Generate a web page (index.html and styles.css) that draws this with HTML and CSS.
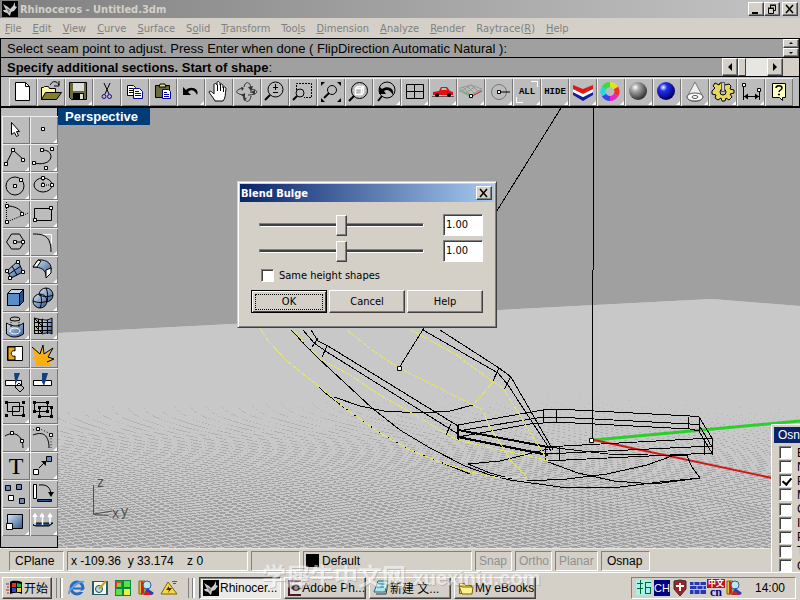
FILE: index.html
```
<!DOCTYPE html>
<html lang="zh">
<head>
    <meta charset="UTF-8">
    <meta name="viewport" content="width=device-width, initial-scale=1.0">
    <title>Rhinoceros - Untitled.3dm</title>
    <link rel="stylesheet" href="styles.css">
</head>
<body>
    <svg class="defs" width="0" height="0">
        <defs>
            <linearGradient id="steel" x1="0" y1="0" x2="1" y2="1"><stop offset="0" stop-color="#dce8f8"/><stop offset="1" stop-color="#2c5490"/></linearGradient>
            <radialGradient id="gray" cx=".35" cy=".3" r=".7"><stop offset="0" stop-color="#fff"/><stop offset=".3" stop-color="#aaa"/><stop offset="1" stop-color="#333"/></radialGradient>
            <radialGradient id="blue" cx=".35" cy=".3" r=".7"><stop offset="0" stop-color="#fff"/><stop offset=".3" stop-color="#2030f0"/><stop offset="1" stop-color="#000060"/></radialGradient>
            <symbol id="rhino" viewBox="0 0 16 16"><rect width="16" height="16"/><path d="M1 3l5 3 2 2 3-3 2-4 0 4 2 1-3 4-3 1-1 4-3-3-3-1-1-2 3 0z" fill="#ccc"/><path d="M4 7l4 2-1 3z" fill="#777"/></symbol>
            <symbol id="books" viewBox="0 0 18 18"><path d="M2 2h6v13H2z" fill="#e8c040" stroke="#806000"/><path d="M4 2l3 1v11l-3 2z" fill="#d02020"/><circle cx="10" cy="6" r="4" fill="#b8e8f0" stroke="#3060a0"/><path d="M7 15l3-6 7 5-2 2z" fill="#2040c0"/><path d="M6 16l4-4 5 4z" fill="#d02020"/></symbol>
        </defs>
    </svg>

    <div class="app">
        <header class="titlebar">
            <svg width="16" height="16"><use href="#rhino"/></svg>
            <h1>Rhinoceros - Untitled.3dm</h1>
            <div class="window-buttons">
                <button type="button" class="btn small" aria-label="Minimize"><svg width="14" height="12"><path d="M3 9h6v2H3z"/></svg></button>
                <button type="button" class="btn small" aria-label="Restore"><svg width="14" height="12"><path d="M5.500 5V2.500h5v5H9M3.500 5.500h5v5h-5zM5 2h6M3 5h6" fill="none" stroke="#000"/></svg></button>
                <button type="button" class="btn small last" aria-label="Close"><svg width="14" height="12"><path d="M3 2l7 8M10 2l-7 8" stroke="#000" stroke-width="1.500"/></svg></button>
            </div>
        </header>

        <nav class="menu">
            <a href="#"><u>F</u>ile</a>
            <a href="#"><u>E</u>dit</a>
            <a href="#"><u>V</u>iew</a>
            <a href="#"><u>C</u>urve</a>
            <a href="#"><u>S</u>urface</a>
            <a href="#">S<u>o</u>lid</a>
            <a href="#"><u>T</u>ransform</a>
            <a href="#">Too<u>l</u>s</a>
            <a href="#"><u>D</u>imension</a>
            <a href="#"><u>A</u>nalyze</a>
            <a href="#"><u>R</u>ender</a>
            <a href="#">Raytrace(<u>R</u>)</a>
            <a href="#"><u>H</u>elp</a>
        </nav>

        <section class="command">
            <div class="command-row">
                <span class="history">Select seam point to adjust. Press Enter when done ( FlipDirection Automatic Natural ):</span>
                <div class="spinner">
                    <button type="button" class="btn" aria-label="Up"><svg width="14" height="7"><path d="M7 2l2 2H5z"/></svg></button>
                    <button type="button" class="btn" aria-label="Down"><svg width="14" height="7"><path d="M5 3h4L7 5z"/></svg></button>
                </div>
            </div>
            <div class="command-row">
                <span class="prompt"><b>Specify additional sections. Start of shape</b>:</span>
                <div class="scroller">
                    <button type="button" class="btn" aria-label="Left"><svg width="14" height="16"><path d="M9 4v8L5 8z"/></svg></button>
                    <span class="scroll-thumb"></span>
                    <span class="scroll-track"></span>
                    <button type="button" class="btn" aria-label="Right"><svg width="14" height="16"><path d="M5 4v8l4-4z"/></svg></button>
                </div>
            </div>
        </section>

        <div class="toolbar">
            <button type="button" class="tool" aria-label="New"><svg viewBox="0 0 28 28"><path d="M6.500 4.500h10l4 4v14h-14z" fill="#fff" stroke="#000"/><path d="M16.500 4.500v4h4" fill="none" stroke="#000"/></svg></button>
            <button type="button" class="tool" aria-label="Open"><svg viewBox="0 0 28 28"><path d="M4.500 21.500v-12h2l1-1h4l1 2h6v4" fill="#fff8a0" stroke="#000"/><path d="M4.500 21.500l4-7h16l-5 7z" fill="#808030" stroke="#000"/><path d="M13 7c3-5 7-4 9 0M22 3v5h-5" fill="none" stroke="#000"/></svg></button>
            <button type="button" class="tool more" aria-label="Save"><svg viewBox="0 0 28 28"><path d="M4.500 4.500h17v17h-15l-2-2z" fill="#6b6b3c" stroke="#000"/><path d="M8 5h11v8H8z" fill="#ddd"/><path d="M8 15h11v6H8z"/><path d="M15 16h3v5h-3z" fill="#ddd"/></svg></button>
            <button type="button" class="tool" aria-label="Cut"><svg viewBox="0 0 28 28"><path d="M11 5l5 11M17 5l-5 11" stroke="#000"/><circle cx="11" cy="18.500" r="2" fill="none" stroke="#208"/><circle cx="16.500" cy="18.500" r="2" fill="none" stroke="#208"/></svg></button>
            <button type="button" class="tool" aria-label="Copy"><svg viewBox="0 0 28 28"><path d="M6.500 7.500h6l2 2v8h-8z" fill="#fff" stroke="#000"/><path d="M8 10.500h4M8 12.500h4M8 14.500h4" stroke="#000"/><path d="M12.500 10.500h6l3 3v7h-9z" fill="#fff" stroke="#009"/><path d="M14 13.500h4M14 15.500h6M14 17.500h6" stroke="#009"/></svg></button>
            <button type="button" class="tool" aria-label="Paste"><svg viewBox="0 0 28 28"><path d="M6.500 7.500h14v12h-14z" fill="#6b6b3c" stroke="#000"/><path d="M10 9l1-3h5l1 3z" fill="#dd8" stroke="#000"/><path d="M13.500 11.500h6l2 2v7h-8z" fill="#fff" stroke="#009"/><path d="M15 14.500h3M15 16.500h5M15 18.500h5" stroke="#009"/></svg></button>
            <button type="button" class="tool more" aria-label="Undo"><svg viewBox="0 0 28 28"><path d="M6 9v8h8l-3-3c3-3 7-2 9 3 3-6-6-10-11-5z"/></svg></button>
            <button type="button" class="tool" aria-label="Pan"><svg viewBox="0 0 28 28"><path d="M10 23c-2-4-5-7-6-9 1-2 3 0 5 2V7c0-2 2-2 3 0V5c0-2 2-2 3 0v2c1-2 3-1 3 1v2c1-2 3-1 3 1-1 5 0 8-3 12z" fill="#fff" stroke="#000"/><path d="M12.500 7v6M15.500 6v7M18.500 9v5" stroke="#000"/></svg></button>
            <button type="button" class="tool" aria-label="Rotate view"><svg viewBox="0 0 28 28"><path d="M10 10c-9 2-8 6 1 7M18 11c9 1 7 6-3 6M11 19c1 6 6 6 7-1M11 9c1-6 6-6 7 1v5" fill="none" stroke="#333"/><path d="M8 9l3 1-2 3zM22 12l-4 2 4 3zM10 19l4 1-3 3zM12 15l-4 2 4 3zM20 8l-2 5-3-4z" fill="#333"/></svg></button>
            <button type="button" class="tool" aria-label="Zoom"><svg viewBox="0 0 28 28"><circle cx="14.500" cy="11.500" r="7.500" fill="none" stroke="#000"/><path d="M9 17l-5 5" stroke="#000" stroke-width="2"/><path d="M14.500 6v6M12 9.500h5M12 14.500h5" stroke="#000"/></svg></button>
            <button type="button" class="tool" aria-label="Zoom window"><svg viewBox="0 0 28 28"><path d="M7.500 12V5.500h15v14H15" fill="none" stroke="#000" stroke-dasharray="2 1"/><circle cx="11" cy="15" r="4" fill="none" stroke="#000"/><path d="M8 18l-4 4" stroke="#000" stroke-width="2"/></svg></button>
            <button type="button" class="tool" aria-label="Zoom extents"><svg viewBox="0 0 28 28"><circle cx="15" cy="12" r="4.500" fill="none" stroke="#000"/><path d="M12 15l-5 5" stroke="#000" stroke-width="2"/><path d="M4 4h4L4 8zM24 4h-4l4 4zM4 24h4l-4-4zM24 24h-4l4-4z"/></svg></button>
            <button type="button" class="tool" aria-label="Zoom selected"><svg viewBox="0 0 28 28"><circle cx="14.500" cy="12.500" r="8" fill="none" stroke="#000"/><path d="M9 18l-5 5" stroke="#000" stroke-width="2"/><path d="M10.500 10.500h6v6h-6zM10.500 10.500l2-2h6l-2 2M16.500 16.500l2-2v-6" fill="none" stroke="#fff" stroke-width="1.500"/></svg></button>
            <button type="button" class="tool more" aria-label="Undo view"><svg viewBox="0 0 28 28"><circle cx="14" cy="12" r="8" fill="none" stroke="#000"/><path d="M9 18l-4 5" stroke="#000" stroke-width="2"/><path d="M6 8v8h7l-2-3c3-2 6-1 9 4 2-7-6-10-11-6z"/></svg></button>
            <button type="button" class="tool more" aria-label="Four viewports"><svg viewBox="0 0 28 28"><path d="M5.500 6.500h17v14h-17zM13.500 6v15M5 13.500h18" fill="none" stroke="#000"/></svg></button>
            <button type="button" class="tool more" aria-label="Right view"><svg viewBox="0 0 28 28"><path d="M3 18.500h22" stroke="#555"/><path d="M4 17v-3l6-1 2-4h6l3 4 3 1v3z" fill="#e01010"/><path d="M12 12l1-2h4l1 2z" fill="#bbb"/><circle cx="8" cy="17" r="2"/><circle cx="20" cy="17" r="2"/></svg></button>
            <button type="button" class="tool more" aria-label="Set CPlane"><svg viewBox="0 0 28 28"><path d="M3 10l11-3 11 4M3 13l11 6 11-7M3 10v4M6 9l9 10M10 8l9 9M14 7l8 7M24 11l-11 7M18 9L8 15M14 7L4 13" fill="none" stroke="#999"/><path d="M4 12l10 6" stroke="#5b5"/><path d="M15 18l10-5" stroke="#d22"/><path d="M12.500 16.500h3v3h-3z" fill="#fff" stroke="#000"/></svg></button>
            <button type="button" class="tool more" aria-label="Object snap"><svg viewBox="0 0 28 28"><circle cx="14" cy="14" r="7.500" fill="none" stroke="#777"/><path d="M14 14h11" stroke="#000"/><path d="M12.500 12.500h3v3h-3z" fill="#fff" stroke="#000"/></svg></button>
            <button type="button" class="tool more word">ALL<svg viewBox="0 0 28 28"><path d="M18 3.500h6.500V9M3.500 19v5.500H10" fill="none" stroke="#fff"/></svg></button>
            <button type="button" class="tool more word">HIDE</button>
            <button type="button" class="tool more" aria-label="Layers"><svg viewBox="0 0 28 28"><path d="M4 14l10 5 10-5v3l-10 6-10-6z" fill="#1020a0"/><path d="M4 11l10 4 10-4v3l-10 5-10-5z" fill="#fff"/><path d="M4 7l10 4 10-4v4l-10 5-10-5z" fill="#e01818"/></svg></button>
            <button type="button" class="tool more" aria-label="Color"><svg viewBox="0 0 28 28" fill="none" stroke-width="5"><path d="M13 6.500a7 7 0 0 1 6 3.500" stroke="#e8e020"/><path d="M19 10a7 7 0 0 1 0 7" stroke="#f03030"/><path d="M19 17a7 7 0 0 1-6 3.500" stroke="#f020d0"/><path d="M13 20.500a7 7 0 0 1-6-3.500" stroke="#4040f0"/><path d="M7 17a7 7 0 0 1 0-7" stroke="#20d8f0"/><path d="M7 10a7 7 0 0 1 6-3.500" stroke="#30e040"/></svg></button>
            <button type="button" class="tool more" aria-label="Shade"><svg viewBox="0 0 28 28"><circle cx="13" cy="13" r="9" fill="url(#gray)"/></svg></button>
            <button type="button" class="tool more" aria-label="Render"><svg viewBox="0 0 28 28"><circle cx="13" cy="13" r="9" fill="url(#blue)"/></svg></button>
            <button type="button" class="tool more" aria-label="Spotlight"><svg viewBox="0 0 28 28"><path d="M14 4L6 19c1 6 15 6 16 0z" fill="#eee" stroke="#777"/><ellipse cx="14" cy="19" rx="8" ry="4" fill="#fff" stroke="#555"/><ellipse cx="14" cy="19" rx="3" ry="1.500" fill="none" stroke="#555"/></svg></button>
            <button type="button" class="tool more" aria-label="Options"><svg viewBox="0 0 28 28"><path d="M5 11l-2 2v3l4 1-1 3 3 2 3-2 1 3h3l1-3 3 2 3-3-2-3 4-1v-3l-4-1 1-3-2-2-4 1-1-2h-4l-1 2-4-2-2 3 2 2z" fill="#e8d860" stroke="#000"/><circle cx="14" cy="14" r="3" fill="#bcbcbc" stroke="#000"/><path d="M12.500 4.500v9h3v-9z" fill="#ccc" stroke="#555"/></svg></button>
            <button type="button" class="tool more" aria-label="Dimension"><svg viewBox="0 0 28 28"><path d="M6.500 8v14M22.500 12v10M7 18.500h15" stroke="#000"/><path d="M7 18.500l4-3v6zM22 18.500l-4-3v6z"/><path d="M5.500 5.500h3v3h-3zM20.500 10.500h3v3h-3z" fill="#fff" stroke="#000"/></svg></button>
            <button type="button" class="tool" aria-label="Help"><svg viewBox="0 0 28 28"><path d="M7.500 5.500h13v14h-3v3l-3-3h-7z" fill="#ffffc0" stroke="#000"/><path d="M11 10c0-3 6-3 6 0 0 2-3 2-3 4M13 16.500h2" fill="none" stroke="#000" stroke-width="1.500"/></svg></button>
        </div>

        <main class="workspace">
            <div class="palette">
                <button type="button" class="tool" aria-label="Select"><svg viewBox="0 0 28 28"><path d="M9.500 6.500v12l3-2 2 4 2-1-2-4h3z" fill="#fff" stroke="#000"/></svg></button>
                <button type="button" class="tool more" aria-label="Point"><svg viewBox="0 0 28 28"><path class="pt" d="M11.500 11.500h3v3h-3z"/></svg></button>
                <button type="button" class="tool more" aria-label="Polyline"><svg viewBox="0 0 28 28"><path class="ln" d="M4 20l7-14 11 10"/><path class="pt" d="M2.500 18.500h3v3h-3zM9.500 4.500h3v3h-3zM19.500 14.500h3v3h-3z"/></svg></button>
                <button type="button" class="tool more" aria-label="Curve"><svg viewBox="0 0 28 28"><path class="ln" d="M4 19c8 2 16 0 17-6 0-5-4-7-9-7"/><path class="pt" d="M2.500 17.500h3v3h-3zM10.500 4.500h3v3h-3zM20.500 3.500h3v3h-3zM14.500 22.500h3v3h-3z"/></svg></button>
                <button type="button" class="tool more" aria-label="Circle"><svg viewBox="0 0 28 28"><circle class="ln" cx="13" cy="14" r="9"/><path class="pt" d="M11.500 12.500h3v3h-3zM17.500 6.500h3v3h-3z"/></svg></button>
                <button type="button" class="tool more" aria-label="Ellipse"><svg viewBox="0 0 28 28"><ellipse class="ln" cx="13" cy="13" rx="9" ry="7"/><path class="ln" d="M13 6v7h9" stroke-dasharray="1 1"/><path class="pt" d="M11.500 11.500h3v3h-3zM11.500 4.500h3v3h-3zM20.500 11.500h3v3h-3z"/></svg></button>
                <button type="button" class="tool more" aria-label="Arc"><svg viewBox="0 0 28 28"><path class="ln" d="M5 6c8 0 13 3 16 8"/><path class="ln" d="M4.500 2v20l22-9" stroke-dasharray="1 1"/><path class="pt" d="M3.500 4.500h3v3h-3zM3.500 20.500h3v3h-3zM18.500 12.500h3v3h-3z"/></svg></button>
                <button type="button" class="tool more" aria-label="Rectangle"><svg viewBox="0 0 28 28"><path class="ln" d="M4.500 8.500h17v12h-17z"/><path class="pt" d="M19.500 6.500h3v3h-3zM3.500 18.500h3v3h-3z"/></svg></button>
                <button type="button" class="tool more" aria-label="Polygon"><svg viewBox="0 0 28 28"><path class="ln" d="M4.500 14l5-8h8l5 8-5 7h-8zM14 14h8"/><path class="pt" d="M11.500 12.500h3v3h-3zM19.500 12.500h3v3h-3z"/></svg></button>
                <button type="button" class="tool more" aria-label="Fillet"><svg viewBox="0 0 28 28"><path d="M12 6.500h9.500V16" fill="none" stroke="#fff"/><path class="ln" d="M3 6c10 0 18 1 18 18"/></svg></button>
                <button type="button" class="tool more" aria-label="Surface"><svg viewBox="0 0 28 28"><path d="M5 15l11-10 5 11-12 6z" fill="url(#steel)" stroke="#000"/><path class="ln" d="M7 18l12-8M10 10l5 9"/><path class="pt" d="M14.500 4.500h3v3h-3zM3.500 13.500h3v3h-3zM19.500 14.500h3v3h-3zM6.500 20.500h3v3h-3z"/></svg></button>
                <button type="button" class="tool more" aria-label="Sweep"><svg viewBox="0 0 28 28"><path d="M3 11l5-7c10-1 14 5 13 10l-5 6c0-6-5-9-13-9z" fill="url(#steel)" stroke="#000"/><path d="M3 11l5-7 3 1-4 6zM16 14l5-2v5l-5 5z" fill="#fff" stroke="#000"/></svg></button>
                <button type="button" class="tool more" aria-label="Box"><svg viewBox="0 0 28 28"><path d="M5.500 9.500l4-4h12v12l-4 4h-12z" fill="#c0d4ee" stroke="#000"/><path d="M5.500 9.500h12v12h-12z" fill="#5b8cc8" stroke="#000"/><path d="M17.500 9.500l4-4v12l-4 4z" fill="#24508c" stroke="#000"/></svg></button>
                <button type="button" class="tool more" aria-label="Boolean"><svg viewBox="0 0 28 28"><circle cx="16" cy="11" r="7" fill="url(#steel)" stroke="#000"/><circle cx="10" cy="17" r="7" fill="url(#steel)" stroke="#000"/><path class="ln" d="M9 11c5 2 10 2 14 0M16 4c2 4 2 9 1 14M3 17c5 2 10 2 14 0M10 10c2 4 2 9 0 14"/></svg></button>
                <button type="button" class="tool more" aria-label="Project"><svg viewBox="0 0 28 28"><ellipse class="ln" cx="13" cy="7" rx="5" ry="2"/><path d="M4.500 11c6 4 12 4 17 0v11c-6 4-12 4-17 0z" fill="url(#steel)" stroke="#000"/><ellipse cx="13" cy="19" rx="5" ry="3" fill="none" stroke="#fff"/><path class="ln" d="M9 8v8M17 8v8" stroke-dasharray="1 1"/></svg></button>
                <button type="button" class="tool more" aria-label="Mesh"><svg viewBox="0 0 28 28"><path d="M12 7c4 2 6 1 10-1v16c-4-2-6-1-10 0z" fill="url(#steel)" stroke="#000"/><path class="ln" d="M4.500 6v15M8.500 7v14M12.500 7v14M4 6l8 2M4 10.500h18M4 14.500h18M4 18.500h18M4 21.500h8M4 6l8 8M4 13l8 8M17.500 8v14"/></svg></button>
                <button type="button" class="tool" aria-label="Join"><svg viewBox="0 0 28 28"><path d="M5.500 6.500h15v14h-15z" fill="#fff" stroke="#000"/><path d="M6 7h7v4c-5-2-5 7 0 5v4H6z" fill="#f0a818" stroke="#000"/></svg></button>
                <button type="button" class="tool" aria-label="Explode"><svg viewBox="0 0 28 28"><path d="M2 7l8 7 3-9 1 9 9-4-5 7 6 4-5 1 3 4H5l1-6-4-1 3-3z" fill="#f8b010"/><path class="ln" d="M2 7l8 7 3-9 1 9 9-6-5 9 6 2-7 3"/></svg></button>
                <button type="button" class="tool" aria-label="Trim"><svg viewBox="0 0 28 28"><path d="M3.500 12.500h16v5h-16z" fill="#fff" stroke="#000"/><path d="M12 5h6l-5 13v-5z" fill="#104080"/><path class="ln" d="M13 19l4-4 5 5-4 4z"/></svg></button>
                <button type="button" class="tool" aria-label="Split"><svg viewBox="0 0 28 28"><path d="M3.500 12.500h18v5h-18z" fill="#fff" stroke="#000"/><path d="M12 5h6l-4 13-2-4z" fill="#104080"/></svg></button>
                <button type="button" class="tool more" aria-label="Group"><svg viewBox="0 0 28 28"><path class="ln" d="M5.500 6.500h12v9h-12zM10.500 10.500h11v9h-11z"/><path d="M3 5h3v3H3zM20 5h3v3h-3zM3 18h3v3H3zM20 18h3v3h-3z"/></svg></button>
                <button type="button" class="tool" aria-label="Ungroup"><svg viewBox="0 0 28 28"><path class="ln" d="M4.500 6.500h13v9h-13zM9.500 10.500h12v10h-12z"/><path d="M3 5h3v3H3zM16 5h3v3h-3zM3 14h3v3H3zM16 14h3v3h-3zM8 10h3v3H8zM20 10h3v3h-3zM8 19h3v3H8zM20 19h3v3h-3z"/></svg></button>
                <button type="button" class="tool more" aria-label="Points on"><svg viewBox="0 0 28 28"><path class="ln" d="M3 12c8-5 18-2 18 12"/><path class="pt" d="M8.500 7.500h3v3h-3zM18.500 15.500h3v3h-3z"/></svg></button>
                <button type="button" class="tool more" aria-label="Edit points"><svg viewBox="0 0 28 28"><path class="ln" d="M3 11c10-4 16 0 16 13"/><path class="ln" d="M3 6l5-2 13 6v14" stroke-dasharray="1 2"/><path class="pt" d="M6.500 3.500h3v3h-3zM19.500 9.500h3v3h-3z"/></svg></button>
                <button type="button" class="tool letter">T</button>
                <button type="button" class="tool more" aria-label="Move"><svg viewBox="0 0 28 28"><path class="ln" d="M9 16l5-5"/><path d="M16 9v5l-5-5z"/><path d="M16.500 4.500h5v5h-5z" fill="#6888b8" stroke="#000"/><path class="pt" d="M3.500 17.500h5v5h-5z"/></svg></button>
                <button type="button" class="tool" aria-label="Copy objects"><svg viewBox="0 0 28 28"><path d="M3.500 5.500h5v5h-5zM14.500 4.500h5v5h-5zM17.500 18.500h5v5h-5z" fill="#6888b8" stroke="#000"/><path class="pt" d="M6.500 15.500h5v5h-5z"/></svg></button>
                <button type="button" class="tool" aria-label="Rotate"><svg viewBox="0 0 28 28"><path class="pt" d="M3.500 4.500h3v14h-3z"/><path d="M7.500 19.500h14v2h-14z" fill="#24508c" stroke="#000"/><path class="ln" d="M9 5c8-1 12 3 12 10"/><path d="M18 12h6l-3 5z"/></svg></button>
                <button type="button" class="tool more" aria-label="Scale"><svg viewBox="0 0 28 28"><path d="M5.500 6.500h15v14h-15z" fill="url(#steel)" stroke="#000"/><path class="pt" d="M4.500 15.500h6v6h-6z"/></svg></button>
                <button type="button" class="tool more" aria-label="Extrude"><svg viewBox="0 0 28 28"><path d="M3 17l3-2h17l-4 3H6z" fill="#24508c" stroke="#000"/><path d="M5 17V7M12.500 17V7M20 16V7M3 9l2-3 2 3M10 9l2-3 2 3M18 9l2-3 2 3" fill="none" stroke="#fff" stroke-width="1.500"/></svg></button>
            </div>

            <div class="viewport">
                <svg class="scene" viewBox="58 108 742 440" preserveAspectRatio="xMinYMin slice">
                    <defs>
                        <clipPath id="ground"><path d="M58 333L500 310 712 299 800 306V548H58z"/></clipPath>
                        <linearGradient id="haze" gradientUnits="userSpaceOnUse" x1="0" y1="330" x2="0" y2="500">
                            <stop offset="0" stop-color="#c8c8c8"/>
                            <stop offset=".2" stop-color="#c8c8c8" stop-opacity=".8"/>
                            <stop offset="1" stop-color="#c8c8c8" stop-opacity="0"/>
                        </linearGradient>
                    </defs>
                    <g clip-path="url(#ground)">
                        <path id="grid" class="grid"/>
                        <path d="M58 290H800V500H58z" fill="url(#haze)"/>
                    </g>
                    <path d="M594 440L800 421" stroke="#28d028" stroke-width="3"/>
                    <path d="M594 440L800 484" stroke="#d01818" stroke-width="2"/>
                    <g class="black">
                        <path d="M594 108l-2 332M561 108L399 368"/>
                        <path d="M291 330l27 28 54 50 28 22 30 18 35 18 25 9 20 5 50 7h60l40-5 40-4"/>
                        <path d="M316 384l8 8 26 20 30 21 30 17 30 12 30 12M334 397l26 9 24 5 36 2 30-2 23-6"/>
                        <path d="M303 330l11 13 13 9 131 82M311 330l7 11 10 5 130 80M318 338l-6 9M327 346l-5 11M451 424l-5 11"/>
                        <path d="M423 330l75 43 10 12 43 66M440 330l59 38 12 9 42 73M499 368l-6 13M511 376l-7 14"/>
                        <path d="M458 425l85-15 13-1 134 7 9 1M458 431l85-14h13l134 7 9 1M458 437l72-13 26-2 134 7 9 2M543 410v13M556 409v13M688 417v12"/>
                        <path d="M699 417v14l13 22v-15l-13-21M699 425l13 22M704 440v15"/>
                        <path d="M545 447l167-9M545 454l167-8M545 461l167-8M545 447v14M559 446v15"/>
                        <path class="heavy" d="M458 430l90 17M458 437l90 18M458 425v15"/>
                        <path d="M548 447l60 7 80 2M468 464l32-3 48-12M468 464l22 9 22 6M548 462l30 11 36 8 40 3 46-6"/>
                        <path d="M527 481l40-2 40-5 40-9 28-10 12 1 5 11 8 11"/>
                    </g>
                    <g class="yellow">
                        <path d="M255 320l6 10 7 11 19 20 34 27 29 24 30 21 30 17 30 12 30 10 30 6 27-1"/>
                        <path d="M285 320l8 10 13 15 16 15 28 15 30 20 30 17 30 18 18 10 42 10 30 6 18 5"/>
                        <path d="M347 330l25 20 27 18 74 37 10 5 5 14 12 19 10 17 17 17"/>
                        <path d="M411 330l44 24 37 27 11 7 27 44 18 29M494 381l-21 24"/>
                    </g>
                    <path class="pt" d="M397.500 366.500h4v4h-4zM589.500 438.500h4v4h-4z"/>
                    <g class="axes">
                        <path d="M93.500 485v29.500l15 1M94 514l18-3"/>
                        <text x="97" y="487">z</text>
                        <text x="112" y="518">x</text>
                        <text x="121" y="516">y</text>
                    </g>
                </svg>
                <span class="view-name">Perspective</span>
            </div>

            <form class="dialog">
                <div class="dialog-title">
                    <h2>Blend Bulge</h2>
                    <button type="button" class="btn small" aria-label="Close"><svg width="14" height="12"><path d="M3 2l7 8M10 2l-7 8" stroke="#000" stroke-width="1.500"/></svg></button>
                </div>
                <div class="dialog-body">
                    <div class="bulge">
                        <input type="range" id="bulge1" value="50" aria-label="First bulge">
                        <input type="text" value="1.00" aria-label="First value">
                    </div>
                    <div class="bulge">
                        <input type="range" id="bulge2" value="50" aria-label="Second bulge">
                        <input type="text" value="1.00" aria-label="Second value">
                    </div>
                    <div class="same-height">
                        <input type="checkbox" id="sameheight">
                        <label for="sameheight">Same height shapes</label>
                    </div>
                    <div class="dialog-buttons">
                        <button type="button" class="btn default"><span>OK</span></button>
                        <button type="button" class="btn">Cancel</button>
                        <button type="button" class="btn">Help</button>
                    </div>
                </div>
            </form>

            <aside class="osnap">
                <h2>Osnap</h2>
                <div class="osnap-list">
                    <label><input type="checkbox">End</label>
                    <label><input type="checkbox">Near</label>
                    <label><input type="checkbox" checked>Point</label>
                    <label><input type="checkbox">Mid</label>
                    <label><input type="checkbox">Cen</label>
                    <label><input type="checkbox">Int</label>
                    <label><input type="checkbox">Perp</label>
                    <label><input type="checkbox">Tan</label>
                    <label><input type="checkbox">Quad</label>
                </div>
            </aside>
        </main>

        <footer class="status">
            <span class="field cplane">CPlane</span>
            <span class="field coords">x -109.36&nbsp; y 33.174&nbsp;&nbsp;&nbsp; z 0</span>
            <span class="field blank"></span>
            <span class="field layer"><i></i>Default</span>
            <button type="button" class="field snap off">Snap</button>
            <button type="button" class="field snap off">Ortho</button>
            <button type="button" class="field planar off">Planar</button>
            <button type="button" class="field on">Osnap</button>
        </footer>

        <div class="taskbar">
            <button type="button" class="btn start">
                <svg width="17" height="16" viewBox="0 0 17 16"><path d="M4 2c3-2 9-1 12 0v12c-4-2-8-1-12 0z"/><path d="M6 3l4 0v4H6z" fill="#e03020"/><path d="M11 3l4 1v3h-4z" fill="#30b030"/><path d="M6 8h4v4H6z" fill="#2848d0"/><path d="M11 8h4v4h-4z" fill="#f0d020"/><path d="M0 4h3M1 7h2M0 10h3M1 13h2" stroke="#b02020"/></svg>
                开始
            </button>
            <span class="grip"></span>
            <div class="quick">
                <a href="#" aria-label="Browser"><svg viewBox="0 0 18 18"><circle cx="9" cy="9" r="6" fill="none" stroke="#2468c8" stroke-width="3"/><path d="M5 9.500h11" stroke="#2468c8" stroke-width="2"/><path d="M11 13h6v-3z" fill="#d4d0c8"/><path d="M1 15C0 11 11 1 16 3" fill="none" stroke="#58a0e0" stroke-width="2"/></svg></a>
                <a href="#" aria-label="Desktop"><svg viewBox="0 0 18 18"><path d="M1 2h16v14H1z" fill="#206070"/><path d="M3 3h12v12H3z" fill="#f8f8e8"/><circle cx="8" cy="10" r="3.500" fill="#b0e0f0" stroke="#345"/><path d="M8 10l7-8" stroke="#c8a020" stroke-width="2"/></svg></a>
                <a href="#" aria-label="Windows"><svg viewBox="0 0 18 18"><path d="M1 1h16v16H1z" fill="#084"/><path d="M2 2h6v6H2z" fill="#e84020"/><path d="M3 4h4v4H3zM10 2h6v6h-6zM2 10h6v6H2z" fill="#60e040"/><path d="M10 10h6v6h-6z" fill="#f0f040"/></svg></a>
                <a href="#" aria-label="Books"><svg viewBox="0 0 18 18"><use href="#books"/></svg></a>
                <a href="#" aria-label="Player"><svg viewBox="0 0 18 18"><path d="M8 3l9 12H1z" fill="#f8d840" stroke="#806000"/><path d="M9 7l-3 4h3l-1 3 4-5H9z" fill="#333"/><path d="M12 2.500h5M13 4.500h3" stroke="#e02020"/></svg></a>
            </div>
            <span class="grip"></span>
            <div class="tasks">
                <button type="button" class="btn task active"><svg width="16" height="16"><use href="#rhino"/></svg><span>Rhinocer...</span></button>
                <button type="button" class="btn task"><svg width="16" height="16"><path d="M1 1h14v14H1z" fill="#ddd" stroke="#501820" stroke-width="2"/><path d="M3 8c3-5 7-5 10 0-3 4-7 4-10 0z" fill="#333"/><circle cx="8" cy="8" r="2" fill="#b88"/></svg><span>Adobe Ph...</span></button>
                <button type="button" class="btn task"><svg width="16" height="16"><path d="M5 1h10l-3 11H1z" fill="#a8e8f0" stroke="#206878"/><path d="M5 4h7M4 7h7" stroke="#206878"/><path d="M3 14h10l2-10" fill="none" stroke="#333"/></svg><span>新建 文...</span></button>
                <button type="button" class="btn task"><svg width="16" height="16"><path d="M1.500 13.500v-10h5l1 2h6v8z" fill="#f8e060" stroke="#806000"/><path d="M1 6l4 1h10l-1 7H4z" fill="#fff090" stroke="#806000"/></svg><span>My eBooks</span></button>
            </div>
            <div class="tray">
                <svg viewBox="0 0 18 18"><path d="M1 1h15v15H1z" fill="#a8f0e8"/><path d="M2 4.500h6M5.500 1v14M2 9.500h6M10 3.500h6M10 8.500h5M10 14.500h6M10.500 3v11M15.500 8v6" stroke="#063"/></svg>
                <span class="lang">CH</span>
                <svg viewBox="0 0 18 18"><path d="M3 2l6-1 6 1v8l-6 7-6-7z" fill="#a02028" stroke="#333"/><path d="M9 4v8M5 7h8" stroke="#fff" stroke-width="2"/></svg>
                <svg viewBox="0 0 18 18"><path d="M1 3h16v12H1z" fill="#2838b0"/><path d="M1 6.500h16M1 10.500h16M5 3v3M11 3v3M8 7v3M14 7v3M5 11v4M11 11v4" stroke="#b8c8f8"/></svg>
                <span class="cn"><b>中文</b><b>cn</b></span>
                <svg viewBox="0 0 18 18"><use href="#books"/></svg>
                <time>14:00</time>
            </div>
            <div class="watermark">学犀牛中文网 <small>xuexiniu.com</small></div>
        </div>
    </div>

    <script>
        // two families of ground lines, each running from its vanishing point
        const bottom = 548;
        const horizon = 228;
        let d = '';

        for (let x = -100; x < 4700; x += 12) {
            d += `M-419 ${horizon}L${x} ${bottom}`;
        }
        for (let x = 860; x > -6900; x -= 28) {
            d += `M2896 ${horizon}L${x} ${bottom}`;
        }
        document.getElementById('grid').setAttribute('d', d);
    </script>
</body>
</html>
```
FILE: styles.css
```
* {
    box-sizing: border-box;
}

body {
    margin: 0;
    background-color: #d4d0c8;
    font-family: "Liberation Sans", "Noto Sans CJK SC", sans-serif;
    font-size: 12px;
    color: #000;
}

h1,
h2 {
    margin: 0;
}

button,
input {
    font: inherit;
    color: inherit;
    margin: 0;
    padding: 0;
}

.defs {
    position: absolute;
}

.app {
    display: flex;
    flex-direction: column;
    height: 100vh;
    overflow: hidden;
}

/* raised grey button */
.btn {
    display: flex;
    align-items: center;
    justify-content: center;
    border: 1px solid;
    border-color: #fff #404040 #404040 #fff;
    box-shadow: inset -1px -1px #808080;
    background-color: #d4d0c8;
    white-space: nowrap;
}

.btn.small {
    width: 16px;
    height: 14px;
}

/* title bar and menu */
.titlebar {
    display: flex;
    align-items: center;
    flex: none;
    height: 18px;
    padding: 0 2px;
    background: linear-gradient(to right, #808080, #c4c4c4);
}

.titlebar h1 {
    flex: 1;
    padding-left: 2px;
    font-family: "DejaVu Sans Condensed", "DejaVu Sans", sans-serif;
    font-size: 11px;
    color: #d4d0c8;
}

.window-buttons {
    display: flex;
}

.window-buttons .last {
    margin-left: 2px;
}

.menu {
    display: flex;
    align-items: center;
    flex: none;
    gap: 11px;
    height: 20px;
    padding-left: 5px;
    font-family: "DejaVu Sans Condensed", "DejaVu Sans", sans-serif;
    font-size: 11px;
}

.menu a {
    color: #808080;
    text-decoration: none;
}

/* command lines */
.command {
    flex: none;
    border: 1px solid #000;
    border-width: 1px 1px 0;
    background-color: #a0a0a0;
}

.command-row {
    display: flex;
    align-items: center;
    justify-content: space-between;
    height: 19px;
    padding-left: 6px;
    border-bottom: 1px solid #000;
    font-size: 13px;
    white-space: nowrap;
}

.spinner .btn {
    width: 16px;
    height: 9px;
}

.scroller {
    display: flex;
    height: 18px;
    padding-right: 16px;
    background-color: #d4d0c8;
}

.scroller .btn {
    width: 16px;
}

.scroll-thumb {
    width: 8px;
    border: 1px solid;
    border-color: #fff #404040 #404040 #fff;
}

.scroll-track {
    width: 21px;
    background-color: #e8e6e2;
}

/* tools */
.toolbar {
    display: flex;
    flex: none;
    height: 31px;
    padding: 1px 0 0 8px;
    border: solid #000;
    border-width: 0 1px 2px;
    background-color: #bcbcbc;
}

.tool {
    position: relative;
    flex: none;
    width: 28px;
    height: 28px;
    border: 0;
    background-color: #bcbcbc;
    box-shadow: inset 1px 1px #eee, inset -1px -1px #777;
}

.tool svg {
    display: block;
    width: 28px;
    height: 28px;
}

.more::after {
    content: "";
    position: absolute;
    right: 1px;
    bottom: 1px;
    border: 2px solid;
    border-color: transparent #fff #fff transparent;
}

.word {
    font-family: "Liberation Mono", monospace;
    font-size: 9px;
    font-weight: bold;
}

.word svg {
    position: absolute;
    left: 0;
    top: 0;
}

.letter {
    font-family: "Liberation Serif", serif;
    font-size: 24px;
}

.pt {
    fill: #fff;
    stroke: #000;
}

.ln {
    fill: none;
    stroke: #000;
}

/* workspace */
.workspace {
    position: relative;
    display: flex;
    flex: 1;
    min-height: 0;
}

.palette {
    display: grid;
    grid-template-columns: 28px 28px;
    align-content: start;
    flex: none;
    width: 58px;
    padding: 8px 0 0 1px;
    border: 1px solid #000;
    border-top: 0;
    background-color: #bcbcbc;
}

.viewport {
    position: relative;
    flex: 1;
    min-width: 0;
    overflow: hidden;
    background-color: #a0a0a0;
}

.scene {
    display: block;
    width: 100%;
    height: 100%;
}

.grid {
    fill: none;
    stroke: #c8c8c8;
    shape-rendering: crispEdges;
}

.black,
.yellow {
    fill: none;
    stroke: #000;
    shape-rendering: crispEdges;
}

.yellow {
    stroke: #e6e664;
    stroke-dasharray: 9 1;
}

.heavy {
    stroke-width: 2;
}

.axes {
    fill: #505050;
    font-size: 14px;
}

.axes path {
    fill: none;
    stroke: #505050;
}

.view-name {
    position: absolute;
    left: 0;
    top: 0;
    padding: 0 12px 0 7px;
    background-color: #003c78;
    color: #fff;
    font-size: 13px;
    font-weight: bold;
    line-height: 17px;
}

/* Blend Bulge dialog */
.dialog {
    position: absolute;
    left: 237px;
    top: 73px;
    width: 260px;
    padding: 2px;
    border: 1px solid;
    border-color: #d4d0c8 #404040 #404040 #d4d0c8;
    box-shadow: inset 1px 1px #fff, inset -1px -1px #808080;
    background-color: #d4d0c8;
}

.dialog-title {
    display: flex;
    align-items: center;
    justify-content: space-between;
    height: 18px;
    padding: 0 2px 0 1px;
    background: linear-gradient(to right, #0a246a, #a6caf0);
}

.dialog-title h2 {
    font-family: "DejaVu Sans Condensed", "DejaVu Sans", sans-serif;
    font-size: 11px;
    color: #fff;
}

.dialog-body {
    padding: 12px 11px;
    font-family: "DejaVu Sans Condensed", "DejaVu Sans", sans-serif;
    font-size: 11px;
}

.bulge {
    display: flex;
    align-items: center;
    justify-content: space-between;
    height: 22px;
    margin-bottom: 4px;
    padding-left: 8px;
}

input[type="text"] {
    width: 40px;
    height: 22px;
    padding: 0 2px 2px;
    border: 1px solid;
    border-color: #808080 #fff #fff #808080;
    box-shadow: inset 1px 1px #404040;
    background-color: #fff;
}

input[type="range"] {
    appearance: none;
    width: 165px;
    height: 22px;
    background: none;
}

input[type="range"]::-webkit-slider-runnable-track {
    height: 4px;
    border: 1px solid;
    border-color: #808080 #fff #fff #808080;
    background-color: #404040;
}

input[type="range"]::-webkit-slider-thumb {
    appearance: none;
    width: 11px;
    height: 21px;
    margin-top: -9px;
    border: 1px solid;
    border-color: #fff #404040 #404040 #fff;
    box-shadow: inset -1px -1px #808080;
    background-color: #d4d0c8;
}

input[type="checkbox"] {
    appearance: none;
    flex: none;
    width: 13px;
    height: 13px;
    border: 1px solid;
    border-color: #808080 #fff #fff #808080;
    box-shadow: inset 1px 1px #404040;
    background-color: #fff;
}

input[type="checkbox"]:checked::before {
    content: "";
    display: block;
    width: 4px;
    height: 7px;
    margin: 1px 0 0 4px;
    border: solid #000;
    border-width: 0 2px 2px 0;
    transform: rotate(40deg);
}

.same-height {
    display: flex;
    align-items: center;
    gap: 5px;
    height: 18px;
    margin: 4px 0 6px;
    padding-left: 10px;
}

.dialog-buttons {
    display: flex;
    gap: 2px;
}

.dialog-buttons .btn {
    flex: 1;
    height: 23px;
}

.dialog-buttons .default {
    border-color: #000;
    box-shadow: inset 1px 1px #fff, inset -1px -1px #404040;
}

.default span {
    width: 68px;
    border: 1px dotted #000;
    line-height: 14px;
}

/* Osnap panel hanging over the status bar */
.osnap {
    position: absolute;
    right: 0;
    top: 316px;
    z-index: 1;
    display: flex;
    flex-direction: column;
    width: 29px;
    height: 148px;
    padding: 2px 0 0 2px;
    border: solid #fff;
    border-width: 1px 0 0 1px;
    background-color: #d4d0c8;
    overflow: hidden;
    white-space: nowrap;
}

.osnap h2 {
    padding-left: 4px;
    background-color: #0a246a;
    color: #fff;
    font-size: 12px;
    font-weight: normal;
    line-height: 16px;
}

.osnap-list {
    display: flex;
    flex: 1;
    flex-direction: column;
    justify-content: space-between;
    min-height: 0;
    padding: 3px 0 0 5px;
}

.osnap label {
    display: flex;
    align-items: center;
    gap: 5px;
    height: 13px;
}

/* status bar */
.status {
    display: flex;
    align-items: center;
    flex: none;
    gap: 3px;
    height: 24px;
    padding-left: 9px;
    border-top: 1px solid #e8e6e0;
}

.field {
    flex: none;
    height: 20px;
    padding: 0 3px;
    border: 1px solid;
    border-color: #808080 #fff #fff #808080;
    background: none;
    line-height: 18px;
    text-align: left;
    white-space: pre;
}

.cplane {
    width: 55px;
    padding-left: 5px;
}

.coords {
    width: 181px;
}

.blank {
    width: 49px;
}

.layer {
    display: flex;
    align-items: center;
    gap: 3px;
    width: 169px;
    padding-left: 2px;
}

.layer i {
    width: 13px;
    height: 13px;
    background-color: #000;
}

.snap {
    width: 37px;
}

.planar {
    width: 43px;
}

.off {
    color: #909090;
}

.on {
    width: 49px;
    padding-left: 5px;
}

/* taskbar */
.taskbar {
    position: relative;
    display: flex;
    align-items: center;
    flex: none;
    height: 28px;
    padding: 2px 4px 0 2px;
    border-top: 1px solid #fff;
    font-size: 12px;
}

.start {
    gap: 1px;
    width: 50px;
    height: 22px;
}

.grip {
    width: 7px;
    height: 20px;
    margin: 0 4px;
    border: solid;
    border-width: 0 2px 0 1px;
    border-color: #fff #fff #fff #808080;
    box-shadow: inset -1px 0 #808080;
}

.quick {
    display: flex;
    gap: 5px;
    padding: 0 6px 0 1px;
}

.quick svg,
.tray svg {
    display: block;
    width: 18px;
    height: 18px;
}

.tasks {
    display: flex;
    gap: 3px;
}

.task {
    justify-content: flex-start;
    gap: 1px;
    width: 82px;
    height: 22px;
    padding-left: 3px;
}

.task.active {
    border-color: #404040 #fff #fff #404040;
    box-shadow: inset 1px 1px #808080;
    background-color: #eceae6;
}

.tray {
    display: flex;
    align-items: center;
    height: 22px;
    margin-left: auto;
    padding: 0 10px 0 3px;
    border: 1px solid;
    border-color: #808080 #fff #fff #808080;
}

.lang {
    width: 16px;
    margin: 0 1px;
    background-color: #000080;
    color: #fff;
    line-height: 16px;
    font-size: 11px;
    text-align: center;
}

.cn {
    display: flex;
    flex-direction: column;
    width: 18px;
    font-size: 8px;
    line-height: 9px;
    text-align: center;
    color: #000080;
}

.cn b:first-child {
    background-color: #c01020;
    color: #fff;
}

.cn b:last-child {
    font-family: "Liberation Serif", serif;
    font-size: 12px;
}

time {
    padding-left: 12px;
}

.watermark {
    position: absolute;
    left: 262px;
    bottom: 8px;
    color: #fff;
    font-size: 24px;
    font-weight: bold;
    line-height: 28px;
    opacity: 0.5;
    text-shadow: 1px 1px #999;
    white-space: nowrap;
    pointer-events: none;
}

.watermark small {
    font-size: 20px;
}
```
